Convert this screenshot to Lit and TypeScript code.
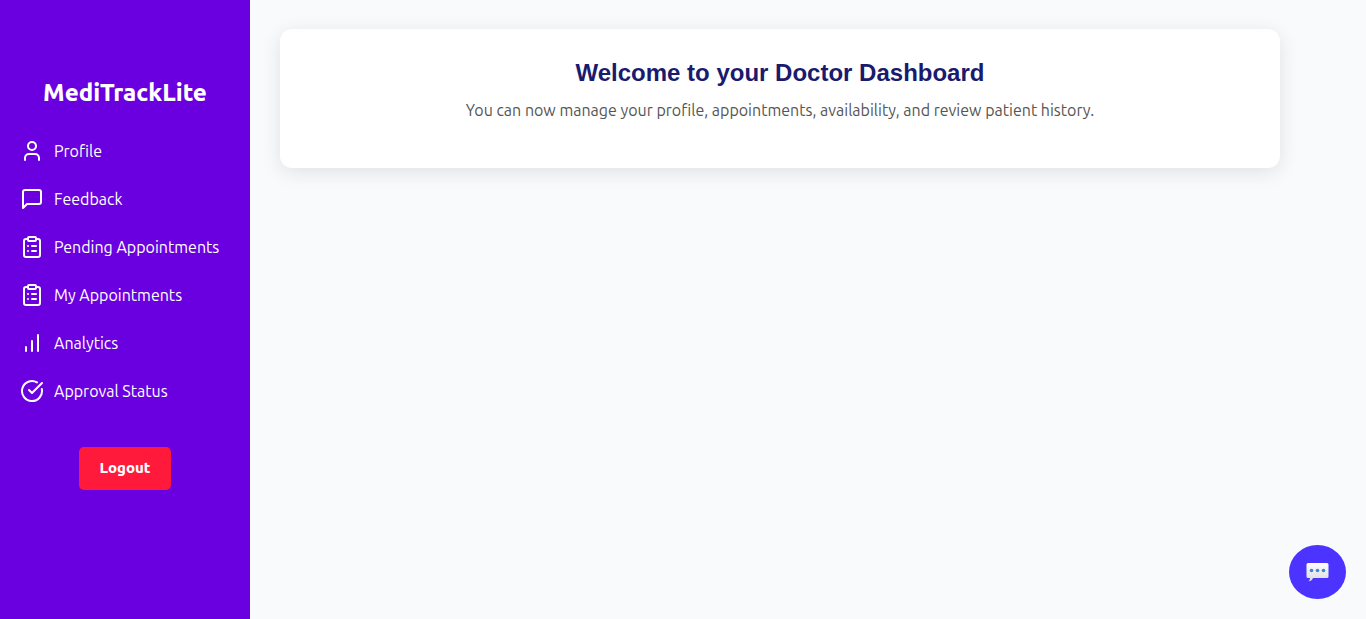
import { LitElement, html, css, svg } from "lit";
import { customElement } from "lit/decorators.js";

const icons = {
  user: svg`<path d="M19 21v-2a4 4 0 0 0-4-4H9a4 4 0 0 0-4 4v2"/><circle cx="12" cy="7" r="4"/>`,
  message: svg`<path d="M21 15a2 2 0 0 1-2 2H7l-4 4V5a2 2 0 0 1 2-2h14a2 2 0 0 1 2 2z"/>`,
  clipboard: svg`<rect width="8" height="4" x="8" y="2" rx="1" ry="1"/><path d="M16 4h2a2 2 0 0 1 2 2v14a2 2 0 0 1-2 2H6a2 2 0 0 1-2-2V6a2 2 0 0 1 2-2h2"/><path d="M12 11h4"/><path d="M12 16h4"/><path d="M8 11h.01"/><path d="M8 16h.01"/>`,
  chart: svg`<path d="M12 20V10"/><path d="M18 20V4"/><path d="M6 20v-4"/>`,
  check: svg`<path d="M21.801 10A10 10 0 1 1 17 3.335"/><path d="m9 11 3 3L22 4"/>`,
};

const links = [
  { label: "Profile", icon: icons.user },
  { label: "Feedback", icon: icons.message },
  { label: "Pending Appointments", icon: icons.clipboard },
  { label: "My Appointments", icon: icons.clipboard },
  { label: "Analytics", icon: icons.chart },
  { label: "Approval Status", icon: icons.check },
];

@customElement("app-root")
export class AppRoot extends LitElement {
  static styles = css`
    :host {
      display: flex;
      min-height: 100vh;
      background: #f9fafc;
      font-family: Ubuntu, "Noto Sans", sans-serif;
      font-size: 16px;
      font-weight: 400;
      line-height: 24px;
    }
    .sidebar {
      box-sizing: border-box;
      flex: 0 0 250px;
      display: flex;
      flex-direction: column;
      align-items: center;
      padding: 77px 20px 20px;
      background: #6a00e0;
      color: #fff;
    }
    .brand {
      margin: 0 0 18px;
      font-size: 24px;
      line-height: 32px;
      font-weight: 800;
    }
    .nav {
      align-self: stretch;
    }
    .list {
      margin: 0;
      padding: 0;
      list-style: none;
    }
    .link {
      display: flex;
      align-items: center;
      gap: 10px;
      padding: 12px 0;
      color: #fff;
      text-decoration: none;
      white-space: nowrap;
    }
    .icon {
      flex: none;
      width: 24px;
      height: 24px;
      fill: none;
      stroke: currentColor;
      stroke-width: 2;
      stroke-linecap: round;
      stroke-linejoin: round;
    }
    .logout {
      margin-top: 32px;
      padding: 12px 20px 13px;
      border: 0;
      border-radius: 5px;
      background: #ff1a3c;
      color: #fff;
      font: inherit;
      font-size: 15px;
      line-height: 18px;
      font-weight: 800;
      cursor: pointer;
    }
    .main {
      flex: 1;
      min-width: 0;
      padding: 29px 30px;
    }
    .card {
      box-sizing: border-box;
      max-width: 1000px;
      padding: 30px 30px 46px;
      border-radius: 12px;
      background: #fff;
      box-shadow: 0 4px 20px rgba(0, 0, 0, 0.1);
      text-align: center;
    }
    .title {
      margin: 0 0 11px;
      color: #1a1a6e;
      font-family: "Liberation Sans", Arial, sans-serif;
      font-size: 24px;
      line-height: 28px;
      font-weight: 700;
    }
    .text {
      margin: 0;
      color: #555;
    }
    .chat {
      position: fixed;
      right: 20px;
      bottom: 20px;
      display: flex;
      align-items: center;
      padding: 15px 16px;
      border: 0;
      border-radius: 50%;
      background: #4c33ff;
      cursor: pointer;
    }
    .bubble {
      width: 25px;
      height: 24px;
    }
  `;

  render() {
    return html`
      <aside class="sidebar">
        <h2 class="brand">MediTrackLite</h2>
        <nav class="nav" aria-label="Doctor">
          <ul class="list">
            ${links.map(
              (l) => html`<li>
                <a class="link" href="#"><svg class="icon" viewBox="0 0 24 24" aria-hidden="true">${l.icon}</svg>${l.label}</a>
              </li>`
            )}
          </ul>
        </nav>
        <button class="logout" type="button">Logout</button>
      </aside>
      <main class="main">
        <section class="card">
          <h1 class="title">Welcome to your Doctor Dashboard</h1>
          <p class="text">You can now manage your profile, appointments, availability, and review patient history.</p>
        </section>
      </main>
      <button class="chat" type="button" aria-label="Open chat">
        <svg class="bubble" viewBox="0 0 25 24" aria-hidden="true">
          <defs>
            <linearGradient id="shade" x1="0" y1="0" x2="0" y2="1">
              <stop offset="0" stop-color="#fdfdfd" />
              <stop offset="1" stop-color="#dcdce0" />
            </linearGradient>
          </defs>
          <path fill="url(#shade)" d="M3 3h19a1.500 1.500 0 0 1 1.500 1.500v12a1.500 1.500 0 0 1-1.500 1.500H8c-.6 1.900-2 3.200-4.500 3.200 1-.8 1.500-1.600 1.500-3.200H3a1.500 1.500 0 0 1-1.500-1.500V4.500A1.500 1.500 0 0 1 3 3z" />
          <g fill="#3a86e0"><circle cx="6.500" cy="10.500" r="1.800" /><circle cx="12.500" cy="10.500" r="1.800" /><circle cx="18.500" cy="10.500" r="1.800" /></g>
        </svg>
      </button>
    `;
  }
}
